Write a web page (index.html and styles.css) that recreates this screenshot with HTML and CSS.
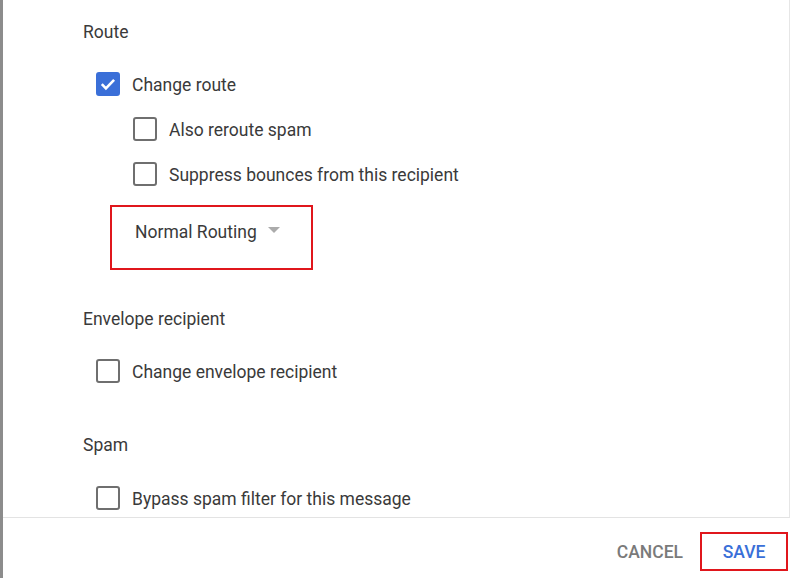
FILE: index.html
```html
<!DOCTYPE html>
<html>
<head>
<meta charset="utf-8">
<link rel="stylesheet" href="styles.css">
</head>
<body>
<div class="dialog">
  <div class="content">
    <div class="section-title">Route</div>
    <div class="row lvl1">
      <span class="cb checked"><svg viewBox="0 0 24 24" width="24" height="24"><path d="M5.8 12.2l4.1 4.1 8.2-8.4" fill="none" stroke="#fff" stroke-width="2.6"/></svg></span>
      <span class="label">Change route</span>
    </div>
    <div class="row lvl2">
      <span class="cb"></span>
      <span class="label">Also reroute spam</span>
    </div>
    <div class="row lvl2">
      <span class="cb"></span>
      <span class="label">Suppress bounces from this recipient</span>
    </div>
    <div class="select">
      <span class="select-text">Normal Routing</span>
      <span class="caret"></span>
    </div>

    <div class="section-title sec2">Envelope recipient</div>
    <div class="row lvl1 first2">
      <span class="cb"></span>
      <span class="label">Change envelope recipient</span>
    </div>

    <div class="section-title sec3">Spam</div>
    <div class="row lvl1 first3">
      <span class="cb"></span>
      <span class="label">Bypass spam filter for this message</span>
    </div>
  </div>
  <div class="footer">
    <button class="btn cancel">CANCEL</button>
    <button class="btn save">SAVE</button>
  </div>
</div>
</body>
</html>
```
FILE: styles.css
```css
html, body {
  margin: 0;
  padding: 0;
  background: #fff;
}
body {
  font-family: Roboto, "Liberation Sans", Arial, sans-serif;
  color: #3a3a3a;
}
.dialog {
  width: 792px;
  height: 578px;
  box-sizing: border-box;
  border-left: 3px solid #8c8c8c;
  display: flex;
  flex-direction: column;
}
.content {
  height: 519px;
  box-sizing: border-box;
  border-bottom: 1px solid #e3e3e3;
  border-right: 1px solid #e6e6e6;
  margin-right: 2px;
  padding: 21px 0 0 80px;
}
.section-title {
  font-size: 17.5px;
  line-height: 22px;
  height: 22px;
}
.row {
  display: flex;
  align-items: center;
  height: 24px;
  margin-top: 21px;
}
.section-title + .row { margin-top: 29px; }
.row.first2 { margin-top: 29px; }
.row.first3 { margin-top: 30px; }
.lvl1 { margin-left: 13px; }
.lvl2 { margin-left: 50px; }
.cb {
  width: 24px;
  height: 24px;
  box-sizing: border-box;
  border: 2px solid #6f6f6f;
  border-radius: 3px;
  flex: none;
  display: flex;
}
.cb.checked {
  background: #3a6fd8;
  border-color: #3a6fd8;
}
.cb.checked svg { margin: -2px; }
.label {
  margin-left: 12px;
  font-size: 17.5px;
  line-height: 22px;
  padding-top: 1px;
}
.select {
  margin: 19px 0 0 27px;
  width: 203px;
  height: 65px;
  box-sizing: border-box;
  border: 2px solid #e0161c;
  padding: 14px 0 0 23px;
  display: flex;
  align-items: flex-start;
}
.select-text {
  font-size: 17.5px;
  line-height: 22px;
  color: #3a3a3a;
}
.caret {
  margin: 6px 0 0 11px;
  width: 0;
  height: 0;
  border-left: 6px solid transparent;
  border-right: 6px solid transparent;
  border-top: 6px solid #ababab;
}
.sec2 { margin-top: 38px; }
.sec3 { margin-top: 51px; }
.footer {
  flex: 1;
  display: flex;
  justify-content: flex-end;
  align-items: center;
  padding-right: 4px;
  padding-top: 14px;
  padding-bottom: 7px;
  box-sizing: border-box;
}
.btn {
  font-family: Roboto, "Liberation Sans", Arial, sans-serif;
  font-size: 17.5px;
  font-weight: 500;
  background: none;
  border: none;
  padding: 0;
  cursor: pointer;
}
.cancel {
  color: #7a7a7a;
  margin-right: 17px;
}
.save {
  color: #3a6fd8;
  width: 88px;
  height: 39px;
  box-sizing: border-box;
  border: 2px solid #e0161c;
}
```
